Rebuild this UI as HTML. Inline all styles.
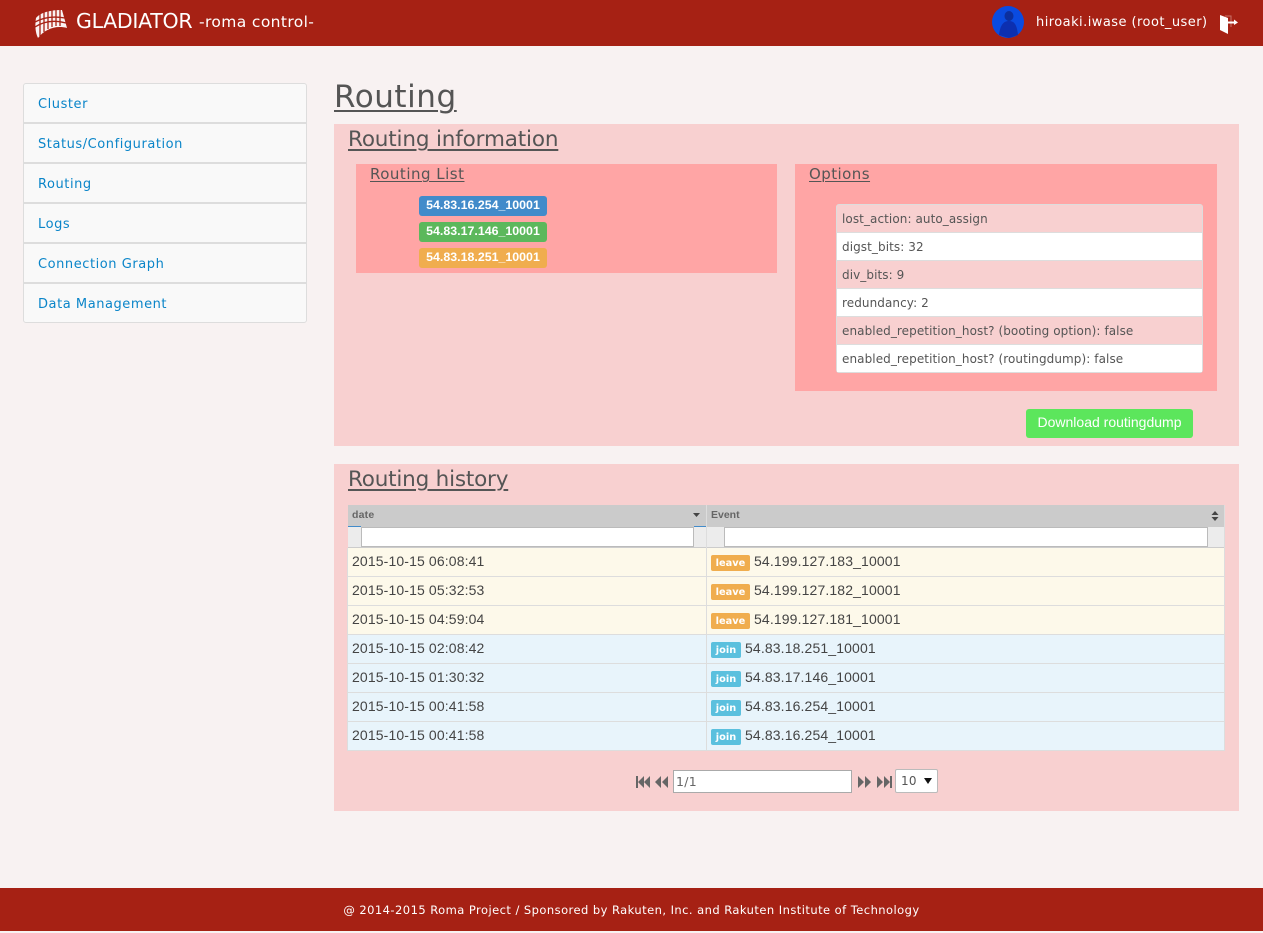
<!DOCTYPE html>
<html lang="en"><head><meta charset="utf-8"><title>Routing</title>
<style>
html,body{margin:0;padding:0}
body{width:1263px;height:931px;position:relative;overflow:hidden;background:#f8f2f2;font-family:"DejaVu Sans",sans-serif;color:#555}
.a{position:absolute;white-space:nowrap}
.ar{font-family:"Liberation Sans",Arial,sans-serif}
.hd{left:0;top:0;width:1263px;height:46px;background:#a62114}
.ft{left:0;top:888px;width:1263px;height:43px;background:#a62114;color:#fff;font-size:11.5px;line-height:45px;text-align:center;letter-spacing:.45px}
.nav{left:23px;width:282px;height:38px;border:1px solid #ddd;background:#f9f9f9;color:#0a85c9;font-size:13px;line-height:41px;text-indent:14px;letter-spacing:.55px;overflow:hidden}
u{text-decoration:underline;text-decoration-thickness:2px;text-underline-offset:3px}
.sm u{text-decoration-thickness:1px;text-underline-offset:2px}
.lab{left:419px;width:128px;height:20px;border-radius:3px;color:#fff;font:bold 12.4px/18px "Liberation Sans",sans-serif;text-align:center}
.opt{left:837px;width:365px;height:27px;border-bottom:1px solid #ddd;font-size:12px;line-height:28px;text-indent:5px;color:#555;letter-spacing:.08px}
.row{left:348px;width:877px;height:28px;border-bottom:1px solid #ddd;}
.t{font:14px/26px "Liberation Sans",sans-serif;color:#444;letter-spacing:.13px}
.b{height:16px;border-radius:2px;color:#fff;font:bold 9.8px/17px "DejaVu Sans",sans-serif;text-align:center}
</style></head><body>
<div class="a hd"></div>
<svg class="a" style="left:34px;top:8px" width="34" height="32" viewBox="0 0 34 32">
<path d="M2 10C6 5 15 2 28 2L33 20C22 17 11 21 4 30C1 24 1 16 2 10Z" fill="#fff" opacity=".95"/>
<g stroke="#a62114" stroke-width="1.3" fill="none"><path d="M1 14C10 9 20 8 31 10M1 19C10 13 21 12 32 15"/><path d="M6 5V28M10 4V24M14 3V21M18 2V19M22 2V18M26 2V18"/></g></svg>
<div class="a" style="left:76px;top:6px;font-size:20.5px;line-height:30px;color:#fff;letter-spacing:-.3px">GLADIATOR</div>
<div class="a" style="left:199px;top:8px;font-size:15.5px;line-height:28px;color:#fff;letter-spacing:.38px">-roma control-</div>
<svg class="a" style="left:992px;top:6px" width="32" height="32" viewBox="0 0 32 32"><circle cx="16" cy="16" r="16" fill="#0a4be0"/><ellipse cx="17" cy="10" rx="4.5" ry="5" fill="#0c2f9e"/><path d="M7 29C8 20 11 15 17 15S25 20 26 29L17 32Z" fill="#0c2fb0"/></svg>
<div class="a" style="left:1036px;top:9px;font-size:13px;line-height:28px;color:#fff;letter-spacing:.45px">hiroaki.iwase (root_user)</div>
<svg class="a" style="left:1219px;top:13px" width="20" height="22" viewBox="0 0 20 22"><path d="M6 3H12V14" fill="none" stroke="#c8736a" stroke-width="1"/><path d="M1 2L9 5V21L1 17Z" fill="#fff"/><path d="M9 8.5H15V6.5L19 9.5L15 12V10.5H9Z" fill="#fff"/></svg>

<div class="a nav" style="top:83px;border-radius:3px 3px 0 0">Cluster</div>
<div class="a nav" style="top:123px">Status/Configuration</div>
<div class="a nav" style="top:163px">Routing</div>
<div class="a nav" style="top:203px">Logs</div>
<div class="a nav" style="top:243px">Connection Graph</div>
<div class="a nav" style="top:283px;border-radius:0 0 3px 3px">Data Management</div>

<div class="a" style="left:334px;top:75px;font-size:31px;line-height:44px;letter-spacing:.55px"><u>Routing</u></div>

<div class="a" style="left:334px;top:124px;width:905px;height:322px;background:#f8d0d0"></div>
<div class="a" style="left:348px;top:125px;font-size:21.5px;line-height:30px;letter-spacing:-.16px"><u>Routing information</u></div>
<div class="a" style="left:356px;top:164px;width:421px;height:109px;background:#ffa5a5"></div>
<div class="a sm" style="left:370px;top:163px;font-size:15px;line-height:22px;letter-spacing:.5px"><u>Routing List</u></div>
<div class="a lab" style="top:196px;background:#428bca">54.83.16.254_10001</div>
<div class="a lab" style="top:222px;background:#5cb85c">54.83.17.146_10001</div>
<div class="a lab" style="top:248px;background:#f0ad4e">54.83.18.251_10001</div>

<div class="a" style="left:795px;top:164px;width:422px;height:227px;background:#ffa5a5"></div>
<div class="a sm" style="left:809px;top:163px;font-size:15px;line-height:22px;letter-spacing:.45px"><u>Options</u></div>
<div class="a" style="left:836px;top:204px;width:365px;height:167px;border:1px solid #ddd;border-radius:3px;background:#fff"></div>
<div class="a opt" style="top:205px;background:#f8d0d0">lost_action: auto_assign</div>
<div class="a opt" style="top:233px;background:#fff">digst_bits: 32</div>
<div class="a opt" style="top:261px;background:#f8d0d0">div_bits: 9</div>
<div class="a opt" style="top:289px;background:#fff">redundancy: 2</div>
<div class="a opt" style="top:317px;background:#f8d0d0">enabled_repetition_host? (booting option): false</div>
<div class="a opt" style="top:345px;background:#fff;border-bottom:0">enabled_repetition_host? (routingdump): false</div>
<div class="a ar" style="left:1026px;top:409px;width:167px;height:29px;border-radius:3px;background:#5ce65c;color:#fff;font-size:14px;line-height:27px;text-align:center">Download routingdump</div>

<div class="a" style="left:334px;top:464px;width:905px;height:347px;background:#f8d0d0"></div>
<div class="a" style="left:348px;top:465px;font-size:21.5px;line-height:30px;letter-spacing:-.2px"><u>Routing history</u></div>

<div class="a" style="left:348px;top:505px;width:877px;height:22px;background:#cbcbcb"></div>
<div class="a" style="left:348px;top:527px;width:877px;height:21px;background:#ececec;border-bottom:1px solid #ccc;box-sizing:border-box"></div>
<div class="a" style="left:706px;top:505px;width:1px;height:43px;background:#ddd"></div>
<div class="a ar" style="left:352px;top:505px;font-size:10.5px;font-weight:bold;line-height:21px;color:#666;letter-spacing:.2px">date</div>
<div class="a ar" style="left:711px;top:505px;font-size:10.5px;font-weight:bold;line-height:21px;color:#666">Event</div>
<svg class="a" style="left:693px;top:512px" width="8" height="6"><path d="M0 1H7L3.5 5Z" fill="#444"/></svg>
<svg class="a" style="left:1211px;top:511px" width="8" height="10"><path d="M4 0L7.5 4H.5ZM4 10L.5 6H7.5Z" fill="#444"/></svg>
<div class="a" style="left:348px;top:526px;width:13px;height:1px;background:#428bca"></div>
<div class="a" style="left:694px;top:526px;width:12px;height:1px;background:#428bca"></div>
<div class="a" style="left:361px;top:527px;width:331px;height:18px;background:#fff;border:1px solid #bbb"></div>
<div class="a" style="left:724px;top:527px;width:482px;height:18px;background:#fff;border:1px solid #bbb"></div>

<div class="a row" style="top:548px;background:#fdf9ea"></div>
<div class="a row" style="top:577px;background:#fdf9ea"></div>
<div class="a row" style="top:606px;background:#fdf9ea"></div>
<div class="a row" style="top:635px;background:#e8f4fb"></div>
<div class="a row" style="top:664px;background:#e8f4fb"></div>
<div class="a row" style="top:693px;background:#e8f4fb"></div>
<div class="a row" style="top:722px;background:#e8f4fb"></div>
<div class="a" style="left:706px;top:548px;width:1px;height:203px;background:#ddd"></div>
<div class="a" style="left:1224px;top:505px;width:1px;height:246px;background:#ddd"></div>
<div class="a" style="left:347px;top:548px;width:1px;height:203px;background:#ddd"></div>

<div class="a t" style="left:352px;top:548px">2015-10-15 06:08:41</div>
<div class="a t" style="left:352px;top:577px">2015-10-15 05:32:53</div>
<div class="a t" style="left:352px;top:606px">2015-10-15 04:59:04</div>
<div class="a t" style="left:352px;top:635px">2015-10-15 02:08:42</div>
<div class="a t" style="left:352px;top:664px">2015-10-15 01:30:32</div>
<div class="a t" style="left:352px;top:693px">2015-10-15 00:41:58</div>
<div class="a t" style="left:352px;top:722px">2015-10-15 00:41:58</div>

<div class="a b" style="left:711px;top:555px;width:39px;background:#f0ad4e">leave</div><div class="a t" style="left:754px;top:548px">54.199.127.183_10001</div>
<div class="a b" style="left:711px;top:584px;width:39px;background:#f0ad4e">leave</div><div class="a t" style="left:754px;top:577px">54.199.127.182_10001</div>
<div class="a b" style="left:711px;top:613px;width:39px;background:#f0ad4e">leave</div><div class="a t" style="left:754px;top:606px">54.199.127.181_10001</div>
<div class="a b" style="left:711px;top:642px;width:30px;background:#5bc0de">join</div><div class="a t" style="left:745px;top:635px">54.83.18.251_10001</div>
<div class="a b" style="left:711px;top:671px;width:30px;background:#5bc0de">join</div><div class="a t" style="left:745px;top:664px">54.83.17.146_10001</div>
<div class="a b" style="left:711px;top:700px;width:30px;background:#5bc0de">join</div><div class="a t" style="left:745px;top:693px">54.83.16.254_10001</div>
<div class="a b" style="left:711px;top:729px;width:30px;background:#5bc0de">join</div><div class="a t" style="left:745px;top:722px">54.83.16.254_10001</div>

<svg class="a" style="left:636px;top:775px" width="33" height="14" viewBox="0 0 33 14"><path d="M0 1H2V13H0ZM8 1V13L2 7ZM14 1V13L8 7ZM25 1V13L19 7ZM32 1V13L26 7Z" fill="#666"/></svg>
<div class="a" style="left:673px;top:770px;width:177px;height:21px;background:#fff;border:1px solid #aaa;font-size:12.5px;line-height:21px;text-indent:2px;color:#666;letter-spacing:.3px">1/1</div>
<svg class="a" style="left:857px;top:775px" width="35" height="14" viewBox="0 0 35 14"><path d="M1 1V13L7 7ZM8 1V13L14 7ZM20 1V13L26 7ZM27 1V13L33 7ZM33 1H35V13H33Z" fill="#666"/></svg>
<div class="a" style="left:895px;top:769px;width:41px;height:22px;background:#fff;border:1px solid #bbb;border-radius:2px;font-size:12px;line-height:22px;text-indent:5px;color:#555;letter-spacing:.3px">10</div>
<svg class="a" style="left:924px;top:777px" width="9" height="8"><path d="M0 1H8L4 7Z" fill="#111"/></svg>

<div class="a ft">@ 2014-2015 Roma Project / Sponsored by Rakuten, Inc. and Rakuten Institute of Technology</div>
</body></html>
